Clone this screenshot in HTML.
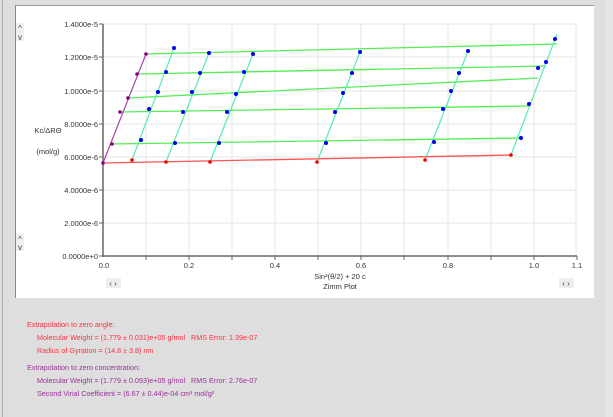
<!DOCTYPE html>
<html><head><meta charset="utf-8"><style>
body{margin:0;width:613px;height:417px;background:#dedede;position:relative;overflow:hidden;font-family:"Liberation Sans","DejaVu Sans",sans-serif;}
.t{position:absolute;font-size:7.2px;white-space:nowrap}
.r{color:#ff3040}.p{color:#9a2f9a}
</style></head><body>
<div style="position:absolute;left:2px;top:0;width:1px;height:417px;background:#b0b0b0"></div>
<div style="position:absolute;left:15px;top:5px;width:578px;height:292px;background:#fff;border-left:1px solid #888;border-top:1px solid #999;"></div>
<div style="position:absolute;left:605px;top:0;width:8px;height:417px;background:#e6e6e6"></div>
<svg style="position:absolute;left:0;top:0" width="613" height="417" font-family="Liberation Sans, sans-serif" font-size="7.5">
<g stroke="#e4e4e4" stroke-width="1">
<line x1="146" y1="24" x2="146" y2="256"/><line x1="189" y1="24" x2="189" y2="256"/><line x1="232" y1="24" x2="232" y2="256"/><line x1="275" y1="24" x2="275" y2="256"/><line x1="318" y1="24" x2="318" y2="256"/><line x1="361" y1="24" x2="361" y2="256"/><line x1="404" y1="24" x2="404" y2="256"/><line x1="448" y1="24" x2="448" y2="256"/><line x1="491" y1="24" x2="491" y2="256"/><line x1="534" y1="24" x2="534" y2="256"/><line x1="576" y1="24" x2="576" y2="256"/>
<line x1="103" y1="24" x2="576" y2="24"/><line x1="103" y1="57" x2="576" y2="57"/><line x1="103" y1="91" x2="576" y2="91"/><line x1="103" y1="124" x2="576" y2="124"/><line x1="103" y1="157" x2="576" y2="157"/><line x1="103" y1="190" x2="576" y2="190"/><line x1="103" y1="223" x2="576" y2="223"/>
</g>
<g stroke="#666" stroke-width="1.5"><line x1="103" y1="24" x2="103" y2="257"/><line x1="103" y1="256" x2="577" y2="256"/></g>
<g stroke="#666" stroke-width="1">
<line x1="99" y1="24" x2="103" y2="24"/><line x1="99" y1="57" x2="103" y2="57"/><line x1="99" y1="91" x2="103" y2="91"/><line x1="99" y1="124" x2="103" y2="124"/><line x1="99" y1="157" x2="103" y2="157"/><line x1="99" y1="190" x2="103" y2="190"/><line x1="99" y1="223" x2="103" y2="223"/><line x1="99" y1="256" x2="103" y2="256"/>
<line x1="146" y1="256" x2="146" y2="260"/><line x1="189" y1="256" x2="189" y2="260"/><line x1="232" y1="256" x2="232" y2="260"/><line x1="275" y1="256" x2="275" y2="260"/><line x1="318" y1="256" x2="318" y2="260"/><line x1="361" y1="256" x2="361" y2="260"/><line x1="404" y1="256" x2="404" y2="260"/><line x1="448" y1="256" x2="448" y2="260"/><line x1="491" y1="256" x2="491" y2="260"/><line x1="534" y1="256" x2="534" y2="260"/><line x1="577" y1="256" x2="577" y2="260"/>
</g>
<g fill="#333" text-anchor="end">
<text x="98" y="27">1.4000e-5</text><text x="98" y="60">1.2000e-5</text><text x="98" y="94">1.0000e-5</text><text x="98" y="127">8.0000e-6</text><text x="98" y="160">6.0000e-6</text><text x="98" y="193">4.0000e-6</text><text x="98" y="226">2.0000e-6</text><text x="98" y="259">0.0000e+0</text>
</g>
<g fill="#333" text-anchor="middle">
<text x="104" y="268">0.0</text><text x="189" y="268">0.2</text><text x="275" y="268">0.4</text><text x="361" y="268">0.6</text><text x="448" y="268">0.8</text><text x="534" y="268">1.0</text><text x="577" y="268">1.1</text>
<text x="340" y="279">Sin²(θ/2) + 20 c</text><text x="340" y="289">Zimm Plot</text>
<text x="48" y="133">Kc/ΔRΘ</text><text x="48" y="154">(mol/g)</text>
</g>
<g fill="#eee"><rect x="16" y="23" width="8" height="18"/><rect x="16" y="233" width="8" height="18"/><rect x="106" y="278" width="15" height="10"/><rect x="559" y="278" width="15" height="10"/></g>
<g fill="#444" font-size="8" text-anchor="middle"><text x="20" y="31">^</text><text x="20" y="40">v</text><text x="20" y="242">^</text><text x="20" y="250">v</text><text x="113" y="286">‹ ›</text><text x="566" y="286">‹ ›</text></g>
<g stroke="#55ee55" stroke-width="1.3" fill="none">
<line x1="111" y1="144" x2="521" y2="138"/><line x1="120" y1="112" x2="529" y2="106"/><line x1="128" y1="98" x2="538" y2="78"/><line x1="137" y1="74" x2="546" y2="66"/><line x1="146" y1="54" x2="557" y2="44"/>
</g>
<g stroke="#55eeaa" stroke-width="1.2">
<line x1="132" y1="160" x2="174" y2="48"/><line x1="166" y1="162" x2="209" y2="53"/><line x1="210" y1="162" x2="253" y2="54"/><line x1="317" y1="162" x2="360" y2="52"/><line x1="425" y1="160" x2="468" y2="51"/><line x1="511" y1="155" x2="557" y2="34"/>
</g>
<line x1="103" y1="163" x2="512" y2="155" stroke="#ff5555" stroke-width="1.3"/>
<line x1="103" y1="163" x2="146" y2="54" stroke="#aa44aa" stroke-width="1.2"/>
<g fill="#880088"><circle cx="103" cy="163" r="1.8"/><circle cx="112" cy="144" r="1.8"/><circle cx="120" cy="112" r="1.8"/><circle cx="128" cy="98" r="1.8"/><circle cx="137" cy="74" r="1.8"/><circle cx="146" cy="54" r="1.8"/></g>
<g fill="#ee0000"><circle cx="132" cy="160" r="1.8"/><circle cx="166" cy="162" r="1.8"/><circle cx="210" cy="162" r="1.8"/><circle cx="317" cy="162" r="1.8"/><circle cx="425" cy="160" r="1.8"/><circle cx="511" cy="155" r="1.8"/></g>
<g fill="#0000ee">
<circle cx="141" cy="140" r="2"/><circle cx="149" cy="109" r="2"/><circle cx="158" cy="92" r="2"/><circle cx="166" cy="72" r="2"/><circle cx="174" cy="48" r="2"/>
<circle cx="175" cy="143" r="2"/><circle cx="183" cy="112" r="2"/><circle cx="192" cy="92" r="2"/><circle cx="200" cy="73" r="2"/><circle cx="209" cy="53" r="2"/>
<circle cx="219" cy="143" r="2"/><circle cx="227" cy="112" r="2"/><circle cx="236" cy="94" r="2"/><circle cx="244" cy="72" r="2"/><circle cx="253" cy="54" r="2"/>
<circle cx="326" cy="143" r="2"/><circle cx="335" cy="112" r="2"/><circle cx="343" cy="93" r="2"/><circle cx="352" cy="73" r="2"/><circle cx="360" cy="52" r="2"/>
<circle cx="434" cy="142" r="2"/><circle cx="443" cy="109" r="2"/><circle cx="451" cy="91" r="2"/><circle cx="459" cy="73" r="2"/><circle cx="468" cy="51" r="2"/>
<circle cx="521" cy="138" r="2"/><circle cx="529" cy="104" r="2"/><circle cx="538" cy="68" r="2"/><circle cx="546" cy="62" r="2"/><circle cx="555" cy="39" r="2"/>
</g>
</svg>
<div class="t r" style="left:27px;top:320px">Extrapolation to zero angle:</div>
<div class="t r" style="left:37px;top:333px">Molecular Weight = (1.779 ± 0.031)e+05 g/mol &nbsp; RMS Error: 1.39e-07</div>
<div class="t r" style="left:37px;top:346px">Radius of Gyration = (14.8 ± 3.8) nm</div>
<div class="t p" style="left:27px;top:363px">Extrapolation to zero concentration:</div>
<div class="t p" style="left:37px;top:376px">Molecular Weight = (1.779 ± 0.093)e+05 g/mol &nbsp; RMS Error: 2.76e-07</div>
<div class="t p" style="left:37px;top:389px">Second Virial Coefficient = (6.67 ± 0.44)e-04 cm³ mol/g²</div>
</body></html>
